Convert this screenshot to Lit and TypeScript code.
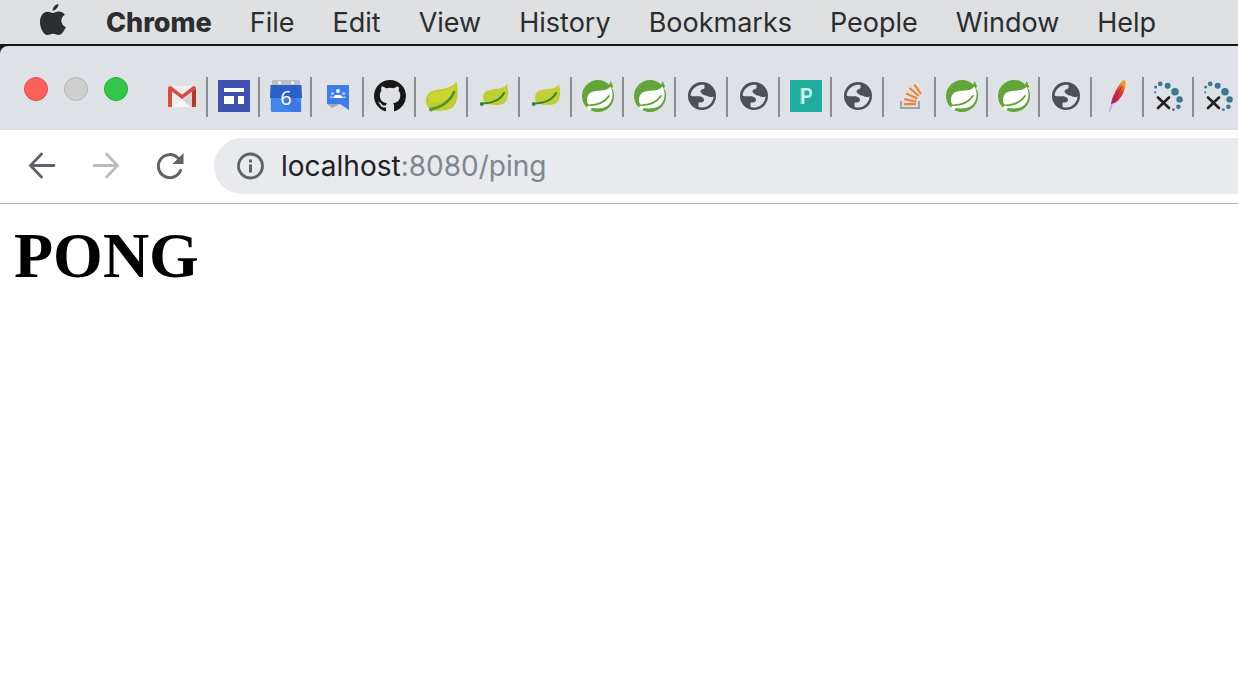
import { LitElement, html, css, svg } from "lit";
import { customElement } from "lit/decorators.js";

const globe = svg`
  <circle cx="16" cy="16" r="14" fill="#4d5156"/>
  <path fill="#dee1e6" d="M4.600 15.500C5 10.500 8.500 6.500 13.500 5.200C16 4.600 18 4.600 18.500 5.200V7.500C18.500 8.500 17.500 9 16 9.500C14.500 10 14 11 15 12.500C16.500 14.800 18.500 15.300 21 15.800C23 17.200 25.500 17.500 27.500 16.500C27.300 22.500 22.300 27.500 16 27.500C15 27.500 13.500 27.300 12.500 27V22.500H15C16.800 22.500 18 21.500 18 20C18 17.500 15.500 16.500 12.500 16.200C10 16 7 17 4.600 15.500Z"/>`;

const spring = svg`
  <circle cx="16" cy="16" r="16" fill="#62a539"/>
  <path fill="#fff" d="M28.500 6.500C31.500 12 31 18.500 28 23C24.500 28.500 17 29 9.500 28L6.500 25C4 21 4.500 15 9 12.300C14.500 9.300 24.500 12.500 28.500 6.500Z"/>
  <path fill="none" stroke="#62a539" stroke-width="1.800" stroke-linecap="round" d="M6 25.300C14 25.500 22.500 22.500 27 16"/>
  <circle cx="7.300" cy="28" r="2.200" fill="#fff"/>
  <path fill="#62a539" d="M27.200 4.500l1.500-3.500 2.500 6-2 1z"/>`;

const leaf = svg`
  <path fill="#c1cf37" d="M29 4C30.500 10 31 18 27.500 22C24 26 15 25.700 8 23.500C4 21 4 14 8.500 11C14 8 24 11 29 4Z"/>
  <path fill="none" stroke="#328431" stroke-width="2" stroke-linecap="round" d="M6 23.200C13 23.700 22.500 20 26 13"/>
  <circle cx="3.800" cy="24" r="2" fill="#328431"/>`;

const loading = svg`
  <g fill="#3f7897">
    <circle cx="1.200" cy="12.300" r="1.100"/><circle cx="1.600" cy="7" r="1.500"/>
    <circle cx="6.200" cy="3.900" r="2.300"/><circle cx="13.700" cy="5.700" r="3"/>
    <circle cx="21" cy="11.700" r="3.800"/><circle cx="25.600" cy="19.400" r="3.200"/>
    <circle cx="24.400" cy="26.800" r="2.300"/><circle cx="19.400" cy="29.700" r="1.400"/>
  </g>
  <path fill="none" stroke="#231f20" stroke-width="2.600" stroke-linecap="round" d="M4 17.500L15 28M15 17.500L4 28"/>`;

const icons: Record<string, unknown> = {
  globe, spring, leaf, loading,
  gmail: svg`
    <path fill="#eceded" d="M4 6H28V27H4Z"/>
    <path fill="#d3d4d5" d="M16 19L28 10V27H24Z"/>
    <path fill="#fafafa" d="M16 19L6 27H24Z" opacity=".7"/>
    <path fill="#d84b40" d="M2 8.500C2 6.500 3.500 6 5 6.200L16 14.800L27 6.200C28.500 6 30 6.500 30 8.500L16 19L6 11.500V27H3.500C2.500 27 2 26.500 2 25.500Z"/>
    <path fill="#b5362e" d="M26 11.500L30 8.500V25.500C30 26.500 29.500 27 28.500 27H26Z"/>`,
  sites: svg`<path fill="#3f51b0" d="M0 0H32V32H0Z"/><path fill="#fff" d="M6 8H26V12H6ZM6 16H16V24H6ZM20 16H26V24H20Z"/>`,
  calendar: svg`
    <path fill="#bdbec0" d="M2 6V1.500Q2 0 3.500 0H28.500Q30 0 30 1.500V6Z"/>
    <path fill="#4285ed" d="M0.800 17H31.200V30.500Q31.200 32 29.700 32H2.300Q.8 32 .8 30.500Z"/>
    <path fill="#326fdb" d="M20 14L31 25V32H23L12 25Z" opacity=".55"/>
    <path fill="#2c5fca" d="M.5 5H31.500L32 18H0Z"/>
    <circle cx="9.500" cy="2.700" r="1.500" fill="#fff"/><circle cx="22.500" cy="2.700" r="1.500" fill="#fff"/>
    <text x="16" y="25" fill="#fff" text-anchor="middle" font-family="Open Sans, sans-serif" font-size="20">6</text>`,
  groups: svg`
    <path fill="#e3e2de" d="M3 3H29V24L27 30L18 24H3Z"/>
    <path fill="#aaa9a5" d="M5 24H18L10 28Z"/>
    <path fill="#3b7ded" d="M5 5H27V30L18 24H5Z"/>
    <g fill="#a9c8fa"><circle cx="10.500" cy="13.500" r="1.600"/><circle cx="21.500" cy="13.500" r="1.600"/><path d="M8 18V16.500H24V18Z"/></g>
    <circle cx="16" cy="11" r="2" fill="#fff"/><path fill="#fff" d="M12 18V17Q12 14.800 16 14.800T20 17V18Z"/>`,
  github: svg`<path fill="#191717" transform="scale(2)" d="M8 0C3.580 0 0 3.580 0 8c0 3.540 2.290 6.530 5.470 7.590.4.070.55-.17.55-.38 0-.19-.01-.82-.01-1.490-2.010.37-2.530-.49-2.690-.94-.09-.23-.48-.94-.82-1.130-.28-.15-.68-.52-.01-.53.63-.01 1.080.58 1.230.82.720 1.210 1.870.87 2.330.66.07-.52.28-.87.51-1.070-1.780-.2-3.640-.89-3.640-3.950 0-.87.31-1.590.82-2.150-.08-.2-.36-1.020.08-2.120 0 0 .67-.21 2.200.82.64-.18 1.320-.27 2-.27s1.360.09 2 .27c1.530-1.040 2.200-.82 2.200-.82.440 1.100.160 1.920.080 2.120.510.560.820 1.270.820 2.150 0 3.070-1.870 3.750-3.650 3.950.290.250.540.730.540 1.480 0 1.070-.010 1.930-.010 2.200 0 .210.150.460.550.380A8.010 8.010 0 0 0 16 8c0-4.420-3.580-8-8-8z"/>`,
  bigleaf: svg`
    <path fill="#bfcd31" d="M30.500 1C32 9 33 20 28 26C23 31.500 14 31 6 30.500C-1 27 -2 17 3.500 12.500C10 7.500 25 11 30.500 1Z"/>
    <path fill="#d5da31" opacity=".6" d="M3 15C9 10 23 13 29 5C29 13 22 22 4 23Z"/>
    <path fill="none" stroke="#55922d" stroke-width="2.600" stroke-linecap="round" d="M5 29C14 28 24 22 28 12"/>
    <circle cx="5" cy="29.500" r="2" fill="#5b9a32"/>`,
  pivot: svg`
    <path fill="#1fae9d" d="M0 0H32V32H0Z"/>
    <path fill="none" stroke="#8edbd1" stroke-width="1.600" d="M11.400 8V24M11 9H16"/>
    <path fill="none" stroke="#d3f2ee" stroke-width="2.400" d="M13.200 24V9.300H17.500Q20.800 9.300 20.800 13T17.500 16.700H13.500"/>`,
  stack: svg`
    <path fill="none" stroke="#9fa3a7" stroke-width="2" d="M7 21V28H25V21"/>
    <path fill="none" stroke="#f58233" stroke-width="2.200" d="M10 24.200H22M10.200 19.200L22.300 21.600M12 13.600L23.300 18.600M15.600 8.200L24.800 16M20.400 4.600L27 13.800"/>`,
  feather: svg`
    <defs><linearGradient id="plume" x1="0" y1="1" x2=".5" y2="0">
      <stop offset="0" stop-color="#8e3a96"/><stop offset=".3" stop-color="#cc2448"/><stop offset=".65" stop-color="#d93a36"/><stop offset="1" stop-color="#f59a28"/>
    </linearGradient></defs>
    <path fill="none" stroke="#b7a0cc" stroke-width="1.200" d="M7.500 31.500L11 21"/>
    <path fill="url(#plume)" d="M22.500 0C24 1 24.200 5 22 11C19.500 17.500 15 23.500 9 24C9.500 19 13 11 17.500 4.500C19.300 2 20.500 .5 22.500 0Z"/>
    <path fill="none" stroke="#8b1c53" stroke-width=".8" d="M10.500 23L20 6"/>`,
};

const tabs: [string, string][] = [
  ["gmail", "Gmail"], ["sites", "Sites"], ["calendar", "Calendar"], ["groups", "Groups"],
  ["github", "GitHub"], ["bigleaf", "Spring"], ["leaf", "Spring Guide"], ["leaf", "Spring Guide"],
  ["spring", "Spring Boot"], ["spring", "Spring Boot"], ["globe", "Page"], ["globe", "Page"],
  ["pivot", "Pivotal"], ["globe", "Page"], ["stack", "Stack Overflow"], ["spring", "Spring Boot"],
  ["spring", "Spring Boot"], ["globe", "Page"], ["feather", "Apache"], ["loading", "Search"], ["loading", "Search"],
];

const menus = ["Chrome", "File", "Edit", "View", "History", "Bookmarks", "People", "Window", "Help"];

@customElement("app-root")
export class AppRoot extends LitElement {
  static styles = css`
    :host { display: block; min-height: 100vh; background: #fff; overflow: hidden; }
    button { appearance: none; border: 0; margin: 0; padding: 0; background: none; font: inherit; color: inherit; flex: none; }
    svg { display: block; }
    .menubar {
      display: flex; align-items: flex-start; gap: 38px; height: 44px; padding-left: 38px;
      background: #dee0e1; color: #2b2d2f; border-bottom: 2px solid #16181d;
      font: 27px/46px Inter, sans-serif; white-space: nowrap;
    }
    .apple { width: 30px; height: 36px; }
    .app { font-weight: 800; }
    .frame { background: #16181d; }
    .strip { display: flex; height: 84px; background: #dee1e6; border-top-left-radius: 8px; }
    .lights { display: flex; gap: 16px; padding: 31px 28px 0 24px; flex: none; }
    .light { width: 24px; height: 24px; border-radius: 50%; border: 1px solid; box-sizing: border-box; }
    .close { background: #fc605b; border-color: #e24b46; }
    .minimise { background: #cfcfcf; border-color: #b4b4b7; }
    .zoom { background: #34c84a; border-color: #24ac38; }
    .tabs { display: flex; align-items: flex-start; padding-top: 31px; }
    .tab {
      box-sizing: border-box; width: 52px; height: 40px; padding: 3px 8px 5px 10px;
      border-right: 2px solid #8a8d91;
    }
    .tab.narrow { width: 50px; padding-right: 6px; }
    .tab svg { overflow: visible; }
    .toolbar {
      display: flex; align-items: center; height: 72px; border-bottom: 1px solid #b3b4b6;
      padding: 0 0 1px 26px; gap: 32px; background: #fff;
    }
    .nav { width: 32px; height: 32px; color: #5f6368; }
    .nav:disabled { color: #babcbe; }
    .address {
      flex: 1; display: flex; align-items: center; gap: 16px; height: 56px; margin-left: -4px;
      padding-left: 21px; background: #e8eaed; border-radius: 28px 0 0 28px;
    }
    .url { font: 28px/36px Inter, sans-serif; color: #80868b; }
    .host { color: #202124; }
    h1 { margin: 0; padding: 16px 14px; font: bold 64px/72px "Liberation Serif", serif; color: #000; }
  `;

  render() {
    return html`
      <nav class="menubar" aria-label="Menu bar">
        <button class="apple" aria-label="Apple menu">
          <svg width="30" height="36" viewBox="0 0 30 36" fill="#2b2d2f">
            <path d="M20.500 4C20.300 7.500 17.500 10.600 14.500 10.700C14.600 7.300 17.300 4.200 20.500 4Z"/>
            <path d="M15 13C16.500 13 18 11.500 20.800 11.500C23.500 11.500 25.800 13 26.900 14.700C21.600 17.800 22.600 25 27.800 27C26.500 30.500 23.700 35 20.700 35C18.500 35 17.800 33.700 15 33.700C12.200 33.700 11.500 35 9.300 35C5.500 35 2 27.800 2 22.200C2 15.500 5.600 11.700 9.500 11.700C12 11.700 13.600 13 15 13Z"/>
          </svg>
        </button>
        ${menus.map((m, i) => html`<button class=${i === 0 ? "app" : "item"}>${m}</button>`)}
      </nav>
      <div class="frame">
        <header class="strip">
          <div class="lights">
            <button class="light close" aria-label="Close"></button>
            <button class="light minimise" aria-label="Minimise"></button>
            <button class="light zoom" aria-label="Zoom"></button>
          </div>
          <div class="tabs" role="tablist">
            ${tabs.map(([icon, label], i) => html`
              <button role="tab" class="tab ${i > 18 ? "narrow" : ""}" aria-label=${label}>
                <svg width="32" height="32" viewBox="0 0 32 32">${icons[icon]}</svg>
              </button>`)}
          </div>
        </header>
      </div>
      <div class="toolbar">
        <button class="nav" aria-label="Back">
          <svg width="32" height="32" viewBox="0 0 32 32" fill="none" stroke="currentColor" stroke-width="2.800" stroke-linecap="round"><path d="M28 15.500H4.500M15.500 4L4.500 15.500L15.500 27"/></svg>
        </button>
        <button class="nav" aria-label="Forward" disabled>
          <svg width="32" height="32" viewBox="0 0 32 32" fill="none" stroke="currentColor" stroke-width="2.800" stroke-linecap="round"><path d="M4 15.500H27.500M16.500 4L27.500 15.500L16.500 27"/></svg>
        </button>
        <button class="nav" aria-label="Reload">
          <svg width="32" height="32" viewBox="0 0 32 32"><path fill="none" stroke="currentColor" stroke-width="3" stroke-linecap="round" d="M26.500 20.500A11.500 11.500 0 1 1 24 8"/><path fill="currentColor" d="M29.500 3V14H18.500Z"/></svg>
        </button>
        <div class="address">
          <svg width="30" height="30" viewBox="0 0 30 30"><circle cx="15.500" cy="15" r="12" fill="none" stroke="#5f6368" stroke-width="2.800"/><path fill="#5f6368" d="M14 8.500H17V11.500H14ZM14 13.500H17V21.500H14Z"/></svg>
          <span class="url"><span class="host">localhost</span>:8080/ping</span>
        </div>
      </div>
      <main><h1>PONG</h1></main>
    `;
  }
}
